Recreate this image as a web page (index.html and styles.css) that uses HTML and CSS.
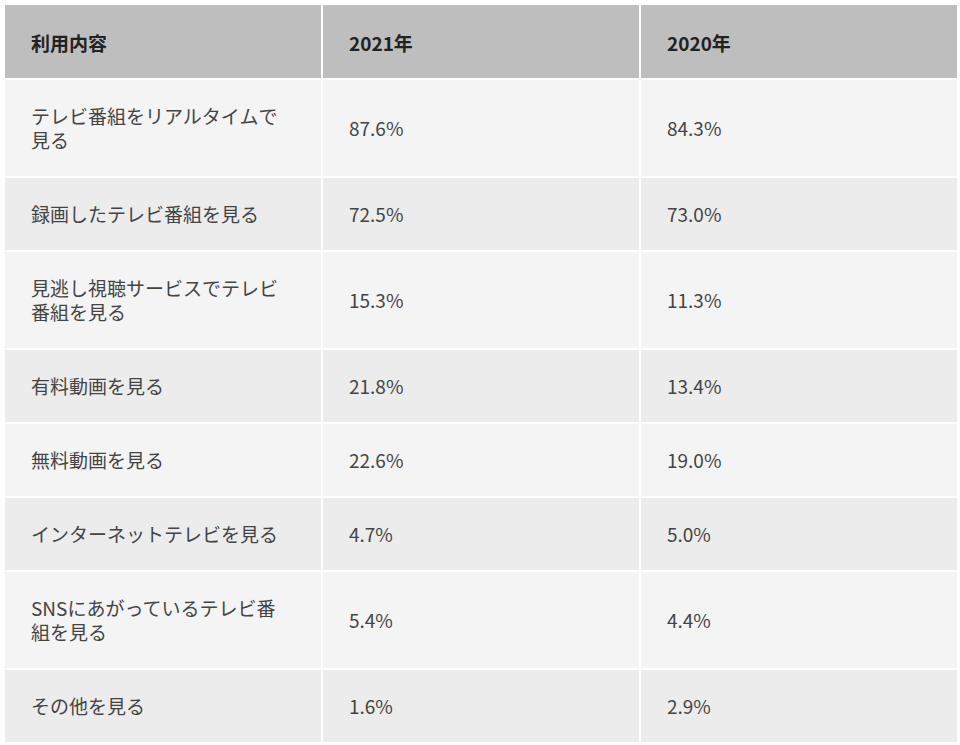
FILE: index.html
```html
<!DOCTYPE html>
<html lang="ja">
<head>
<meta charset="utf-8">
<link rel="stylesheet" href="styles.css">
</head>
<body>
<table class="usage">
  <thead>
    <tr><th>利用内容</th><th>2021年</th><th>2020年</th></tr>
  </thead>
  <tbody>
    <tr><td>テレビ番組をリアルタイムで見る</td><td>87.6%</td><td>84.3%</td></tr>
    <tr><td>録画したテレビ番組を見る</td><td>72.5%</td><td>73.0%</td></tr>
    <tr><td>見逃し視聴サービスでテレビ番組を見る</td><td>15.3%</td><td>11.3%</td></tr>
    <tr><td>有料動画を見る</td><td>21.8%</td><td>13.4%</td></tr>
    <tr><td>無料動画を見る</td><td>22.6%</td><td>19.0%</td></tr>
    <tr><td>インターネットテレビを見る</td><td>4.7%</td><td>5.0%</td></tr>
    <tr><td>SNSにあがっているテレビ番組を見る</td><td>5.4%</td><td>4.4%</td></tr>
    <tr><td>その他を見る</td><td>1.6%</td><td>2.9%</td></tr>
  </tbody>
</table>
</body>
</html>
```

FILE: styles.css
```css
html, body {
  margin: 0;
  padding: 0;
  background: #ffffff;
}
body {
  padding: 3px 1px 2px 3px;
  font-family: "Noto Sans CJK JP", "Noto Sans", sans-serif;
  color: #444444;
}
.usage {
  width: 100%;
  border-collapse: separate;
  border-spacing: 2px;
  table-layout: fixed;
}
.usage th,
.usage td {
  text-align: left;
  vertical-align: middle;
  font-size: 19px;
  line-height: 24px;
  padding: 24px 31px 24px 26px;
}
.usage td {
  font-weight: 400;
}
.usage th {
  background: #bebebe;
  font-weight: 700;
  color: #222222;
  padding-top: 26px;
  padding-bottom: 23px;
}
.usage tbody tr:nth-child(odd) td {
  background: #f4f4f4;
}
.usage tbody tr:nth-child(even) td {
  background: #ececec;
}
```
